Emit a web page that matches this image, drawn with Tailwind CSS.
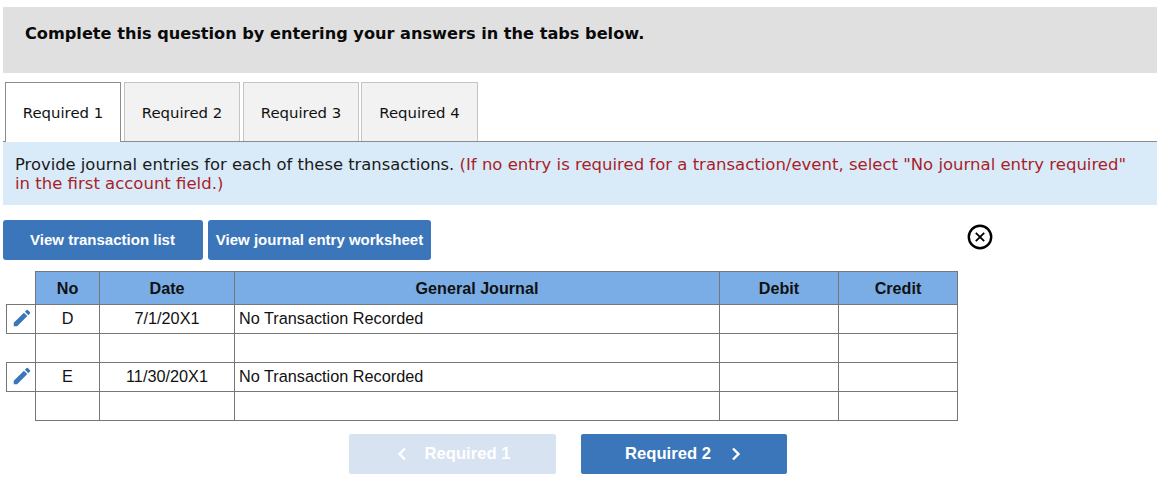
<!DOCTYPE html>
<html lang="en">
<head>
    <meta charset="UTF-8">
    <meta name="viewport" content="width=device-width, initial-scale=1.0">
    <title>Journal entries</title>
    <script src="https://cdn.jsdelivr.net/npm/@tailwindcss/browser@4"></script>
</head>
<body class="bg-white text-black font-['Liberation_Sans',Arial,sans-serif] h-[482px] overflow-hidden">
    <div class="pt-[7px] pl-[3px] w-[1157px]">
        <div class="bg-[#e0e0e0] h-[66px] pl-[22px] pt-[16px] font-['DejaVu_Sans',Verdana,sans-serif] font-bold text-[16.16px] leading-[22px] text-[#0a0a0a]">Complete this question by entering your answers in the tabs below.</div>

        <div class="mt-[9px] h-[60px] flex items-end pl-[2px] border-b border-[#8c8c8c] font-['DejaVu_Sans',Verdana,sans-serif] text-[14.9px] text-[#111]">
            <div class="relative -mb-px w-[116px] h-[60px] pt-[1px] flex items-center justify-center bg-white border border-b-0 border-[#8c8c8c]">Required 1</div>
            <div class="ml-[3px] w-[116px] h-[59px] pt-[2px] flex items-center justify-center bg-[#f2f2f2] border border-b-0 border-[#c4c4c4]">Required 2</div>
            <div class="ml-[3px] w-[116px] h-[59px] pt-[2px] flex items-center justify-center bg-[#f2f2f2] border border-b-0 border-[#c4c4c4]">Required 3</div>
            <div class="ml-[2px] w-[117px] h-[59px] pt-[2px] flex items-center justify-center bg-[#f2f2f2] border border-b-0 border-[#c4c4c4]">Required 4</div>
        </div>

        <div class="bg-[#d9ebf9] h-[63px] pl-[12px] pr-[20px] pt-[13px] font-['DejaVu_Sans',Verdana,sans-serif] text-[16.38px] leading-[19px] text-[#1a1a1a]">
            Provide journal entries for each of these transactions. <span class="text-[16.5px] text-[#a81e28]">(If no entry is required for a transaction/event, select "No journal entry required" in the first account field.)</span>
        </div>

        <div class="mt-[15px] flex items-start">
            <button class="w-[200px] h-[40px] pr-[1px] bg-[#3b76ba] rounded-[3px] text-white font-bold text-[15px]">View transaction list</button>
            <button class="ml-[5px] w-[223px] h-[40px] bg-[#3b76ba] rounded-[3px] text-white font-bold text-[15px]">View journal entry worksheet</button>
            <svg class="ml-[536px] mt-[4px]" width="26" height="26" viewBox="0 0 26 26" fill="none" stroke="#000">
                <circle cx="13" cy="13" r="11.2" stroke-width="2.4"/>
                <path d="M8.8 8.8l8.4 8.4M17.2 8.8l-8.4 8.4" stroke-width="1.8"/>
            </svg>
        </div>

        <table class="mt-[11px] ml-[3px] border-collapse table-fixed w-[951px] text-[16.25px] leading-[18px] text-[#111]">
            <colgroup>
                <col class="w-[29px]"><col class="w-[64px]"><col class="w-[135px]"><col class="w-[485px]"><col class="w-[119px]"><col class="w-[119px]">
            </colgroup>
            <thead>
                <tr class="h-[33px] font-bold text-[16.15px]">
                    <th class="p-0"></th>
                    <th class="p-0 bg-[#7aade6] border border-[#777]">No</th>
                    <th class="p-0 bg-[#7aade6] border border-[#777]">Date</th>
                    <th class="p-0 bg-[#7aade6] border border-[#777]">General Journal</th>
                    <th class="p-0 bg-[#7aade6] border border-[#777]">Debit</th>
                    <th class="p-0 bg-[#7aade6] border border-[#777]">Credit</th>
                </tr>
            </thead>
            <tbody>
                <tr class="h-[29px]">
                    <td class="p-0 border border-[#777] text-center">
                        <svg class="inline-block align-middle translate-x-px -translate-y-px" width="22" height="22" viewBox="0 0 24 24" fill="#3b76ba"><path d="M3 17.25V21h3.75L17.81 9.94l-3.75-3.75L3 17.25zM20.71 7.04a1 1 0 0 0 0-1.41l-2.34-2.34a1 1 0 0 0-1.41 0l-1.83 1.83 3.75 3.75 1.83-1.83z"/></svg>
                    </td>
                    <td class="p-0 pb-[2px] border border-[#777] text-center">D</td>
                    <td class="p-0 pb-[2px] border border-[#777] text-center">7/1/20X1</td>
                    <td class="p-0 pb-[2px] pl-[4px] border border-[#777]">No Transaction Recorded</td>
                    <td class="p-0 border border-[#777]"></td>
                    <td class="p-0 border border-[#777]"></td>
                </tr>
                <tr class="h-[29px]">
                    <td class="p-0"></td>
                    <td class="p-0 border border-[#777]"></td>
                    <td class="p-0 border border-[#777]"></td>
                    <td class="p-0 border border-[#777]"></td>
                    <td class="p-0 border border-[#777]"></td>
                    <td class="p-0 border border-[#777]"></td>
                </tr>
                <tr class="h-[29px]">
                    <td class="p-0 border border-[#777] text-center">
                        <svg class="inline-block align-middle translate-x-px -translate-y-px" width="22" height="22" viewBox="0 0 24 24" fill="#3b76ba"><path d="M3 17.25V21h3.75L17.81 9.94l-3.75-3.75L3 17.25zM20.71 7.04a1 1 0 0 0 0-1.41l-2.34-2.34a1 1 0 0 0-1.41 0l-1.83 1.83 3.75 3.75 1.83-1.83z"/></svg>
                    </td>
                    <td class="p-0 pb-[2px] border border-[#777] text-center">E</td>
                    <td class="p-0 pb-[2px] border border-[#777] text-center">11/30/20X1</td>
                    <td class="p-0 pb-[2px] pl-[4px] border border-[#777]">No Transaction Recorded</td>
                    <td class="p-0 border border-[#777]"></td>
                    <td class="p-0 border border-[#777]"></td>
                </tr>
                <tr class="h-[29px]">
                    <td class="p-0"></td>
                    <td class="p-0 border border-[#777]"></td>
                    <td class="p-0 border border-[#777]"></td>
                    <td class="p-0 border border-[#777]"></td>
                    <td class="p-0 border border-[#777]"></td>
                    <td class="p-0 border border-[#777]"></td>
                </tr>
            </tbody>
        </table>

        <div class="mt-[13px] ml-[346px] flex items-start text-white font-bold text-[16.6px]">
            <button class="w-[207px] h-[40px] pl-[2px] bg-[#d8e3f1] rounded-[2px] flex items-center justify-center">
                <svg width="10" height="14" viewBox="0 0 10 14" fill="none" stroke="#fff" stroke-width="2.4"><path d="M8 1.5L2.5 7 8 12.5"/></svg>
                <span class="ml-[18px]">Required 1</span>
            </button>
            <button class="ml-[25px] w-[206px] h-[40px] pr-[2px] bg-[#3b76ba] rounded-[2px] flex items-center justify-center">
                <span>Required 2</span>
                <svg class="ml-[20px]" width="10" height="14" viewBox="0 0 10 14" fill="none" stroke="#fff" stroke-width="2.4"><path d="M2 1.5L7.5 7 2 12.5"/></svg>
            </button>
        </div>
    </div>
</body>
</html>
